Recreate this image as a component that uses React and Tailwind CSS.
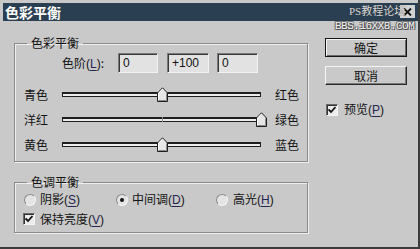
import React from "react";

const FONT = "font-['Noto_Sans_CJK_SC','Noto_Sans',sans-serif]";

const Key = ({ children }) => (
  <span className="font-['Liberation_Sans',sans-serif]">
    (<span className="underline underline-offset-2 text-[#262650]">{children}</span>)
  </span>
);

const Field = ({ value, className }) => (
  <div
    className={`h-[20px] flex items-center pl-[4px] bg-[#e2e2e2] border border-t-[#7a7a7a] border-l-[#7a7a7a] border-b-[#f2f2f2] border-r-[#f2f2f2] shadow-[inset_1px_1px_0_#383838] text-[12px] font-['Liberation_Sans',sans-serif] text-[#111] ${className}`}
  >
    {value}
  </div>
);

const Thumb = ({ left }) => (
  <svg
    width="11"
    height="15"
    viewBox="0 0 11 15"
    className="absolute top-[-7px]"
    style={{ left }}
  >
    <polygon points="0.5,14.5 0.5,6 5.5,0.8 10.5,6 10.5,14.5" fill="#e6e6e6" stroke="#1e1e1e" />
    <polyline points="1.5,13.5 1.5,6.4 5.5,2.2" fill="none" stroke="#ffffff" />
    <polyline points="9.5,6.4 9.5,13.5 1.5,13.5" fill="none" stroke="#8a8a8a" />
  </svg>
);

const SliderRow = ({ left, right, pos, tick }) => (
  <div className="h-[25px] flex items-center pl-[9px]">
    <span className="w-[38px]">{left}</span>
    <div className="relative w-[199px] h-[5px] bg-[#ececec] border-t-2 border-b border-x border-[#1e1e1e]">
      {tick && <div className="absolute left-[99px] top-[-2px] w-px h-[5px] bg-[#8c8c8c]" />}
      <Thumb left={pos} />
    </div>
    <span className="ml-[14px]">{right}</span>
  </div>
);

const Radio = ({ checked }) => (
  <div className="w-[12px] h-[12px] rounded-full border border-t-[#8a8a8a] border-l-[#8a8a8a] border-b-[#f4f4f4] border-r-[#f4f4f4] bg-[#e4e4e4] flex items-center justify-center">
    {checked && <div className="w-[4px] h-[4px] rounded-full bg-[#111]" />}
  </div>
);

const Check = () => (
  <div className="w-[12px] h-[12px] border border-t-[#6a6a6a] border-l-[#6a6a6a] border-b-[#f4f4f4] border-r-[#f4f4f4] shadow-[inset_1px_1px_0_#303030] bg-[#ececec] flex items-center justify-center">
    <svg width="8" height="8" viewBox="0 0 8 8">
      <path d="M0.5 3.5 L3 6 L7.5 1" fill="none" stroke="#111" strokeWidth="1.8" />
    </svg>
  </div>
);

export default function App() {
  return (
    <div
      className={`relative w-[420px] h-[249px] overflow-hidden bg-[#c9c9c9] pt-[3px] pl-[3px] border-r-2 border-b-2 border-[#3c3c3c] text-[12px] text-[#141414] ${FONT}`}
    >
      {/* title bar */}
      <div className="h-[18px] bg-[#2b3f52] flex items-center pl-[2px] text-white font-bold text-[14px] leading-none">
        色彩平衡
      </div>

      {/* close button + watermark */}
      <div className="absolute left-[400px] top-[5px] w-[15px] h-[13px] bg-[#d2d2d2] flex items-center justify-center">
        <svg width="9" height="8" viewBox="0 0 9 8">
          <path d="M1 0.5 L8 7.5 M8 0.5 L1 7.5" stroke="#111" strokeWidth="1.8" />
        </svg>
      </div>
      <div className="absolute left-[349px] top-[4px] text-[11px] leading-[14px] text-[#d4d4d4] [text-shadow:0_0_1px_#3a3a3a] font-['Liberation_Serif','Noto_Sans_CJK_SC',serif]">
        PS教程论坛
      </div>
      <div className="absolute left-[335px] top-[20px] text-[11px] leading-[12px] tracking-[-0.5px] text-[#f0f0f0] [text-shadow:1px_1px_0_#444,-1px_-1px_0_#6a6a6a,1px_-1px_0_#6a6a6a,-1px_1px_0_#6a6a6a] font-['Liberation_Mono',monospace]">
        BBS.16XX8.COM
      </div>

      <div className="flex">
        {/* left column */}
        <div className="ml-[11px] w-[294px]">
          <fieldset className="mt-[14px] h-[127px] border border-[#8a8a8a] shadow-[inset_1px_1px_0_#efefef,1px_1px_0_#efefef]">
            <legend className="ml-[12px] px-[4px] h-[16px] leading-[16px]">色彩平衡</legend>
            <div className="pt-[2px] flex items-center pl-[47px]">
              <span className="w-[56px]">
                色阶<Key>L</Key>:
              </span>
              <Field value="0" className="w-[40px]" />
              <Field value="+100" className="w-[42px] ml-[9px]" />
              <Field value="0" className="w-[41px] ml-[8px]" />
            </div>
            <div className="mt-[9px]">
              <SliderRow left="青色" right="红色" pos={94} />
              <SliderRow left="洋红" right="绿色" pos={193} tick />
              <SliderRow left="黄色" right="蓝色" pos={94} />
            </div>
          </fieldset>

          <fieldset className="mt-[12px] h-[59px] border border-[#8a8a8a] shadow-[inset_1px_1px_0_#efefef,1px_1px_0_#efefef]">
            <legend className="ml-[12px] px-[4px] h-[16px] leading-[16px]">色调平衡</legend>
            <div className="h-[19px] flex items-center pl-[9px]">
              <div className="w-[92px] flex items-center gap-[4px]">
                <Radio />
                <span>阴影<Key>S</Key></span>
              </div>
              <div className="w-[100px] flex items-center gap-[4px]">
                <Radio checked />
                <span>中间调<Key>D</Key></span>
              </div>
              <div className="flex items-center gap-[5px]">
                <Radio />
                <span>高光<Key>H</Key></span>
              </div>
            </div>
            <div className="h-[20px] flex items-center pl-[8px] gap-[5px]">
              <Check />
              <span>保持亮度<Key>V</Key></span>
            </div>
          </fieldset>
        </div>

        {/* right column */}
        <div className="ml-[17px] mt-[17px] w-[82px] flex flex-col">
          <button className="h-[19px] border border-[#151515] bg-[#c9c9c9] shadow-[inset_1px_1px_0_#f4f4f4,inset_-1px_-1px_0_#6a6a6a] text-[12px] leading-none">
            确定
          </button>
          <button className="mt-[9px] h-[19px] bg-[#c9c9c9] border border-t-[#f4f4f4] border-l-[#f4f4f4] border-b-[#2a2a2a] border-r-[#2a2a2a] shadow-[inset_-1px_-1px_0_#7a7a7a] text-[12px] leading-none">
            取消
          </button>
          <div className="mt-[15px] flex items-center gap-[6px] pl-[1px]">
            <Check />
            <span>预览<Key>P</Key></span>
          </div>
        </div>
      </div>
    </div>
  );
}
